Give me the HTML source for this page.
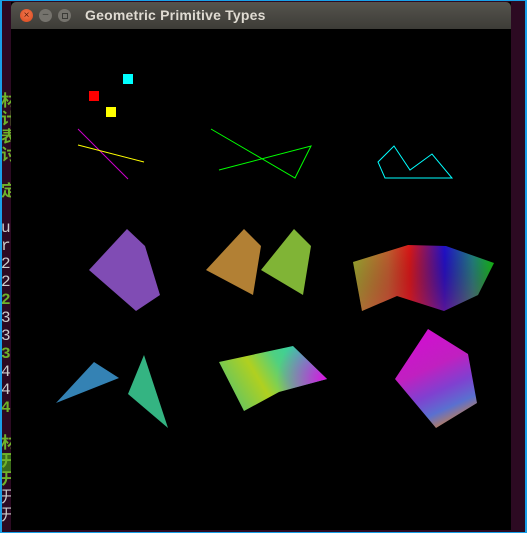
<!DOCTYPE html>
<html><head><meta charset="utf-8"><style>
html,body{margin:0;padding:0;width:527px;height:533px;overflow:hidden;background:#2c0a22;font-family:"Liberation Sans","Noto Sans CJK SC",sans-serif;}
#lb{position:absolute;left:0;top:0;width:2px;height:533px;background:#19a0e8}
#rb{position:absolute;left:525px;top:0;width:2px;height:533px;background:#19a0e8}
#tb{position:absolute;left:0;top:0;width:527px;height:1px;background:#19a0e8}
#bb{position:absolute;left:0;top:532px;width:527px;height:1px;background:#19a0e8}
#win{position:absolute;left:11px;top:2px;width:500px;height:528px;background:#000}
#title{position:absolute;left:0;top:0;width:500px;height:27px;background:linear-gradient(#55534d,#3d3c37);border-radius:5px 5px 0 0}
#title span{position:absolute;left:74px;top:5px;color:#dfdbd2;font-weight:bold;font-size:14px;letter-spacing:0.2px}
.b{position:absolute;top:7px;width:13px;height:13px;border-radius:50%;}
#term{position:absolute;left:1px;top:57px;width:11px;font-family:"Liberation Mono","Noto Sans CJK SC",monospace;font-size:16px;line-height:18px;color:#ccc;overflow:hidden;white-space:pre}
.g{color:#6fb22a;font-weight:bold}
</style></head><body>
<div id="term"> 
 
<span class="g">材</span>
<span class="g">计</span>
<span class="g">表</span>
<span class="g">讨</span>
 
<span class="g">定</span>
 
u
r
2
2
<span class="g">2</span>
3
3
<span class="g">3</span>
4
4
<span class="g">4</span>
 
<span class="g">材</span>
<span class="g" style="background:#3a6a1a">开</span>
<span class="g">开</span>
开
开</div>
<div id="lb"></div><div id="rb"></div><div id="tb"></div><div id="bb"></div>
<div id="win">
<div id="title">
<div class="b" style="left:9px;background:radial-gradient(circle at 50% 40%,#f3764c,#d8471c);color:#5a1a08;font-size:10px;text-align:center;line-height:13px">×</div>
<div class="b" style="left:28px;background:#75736d;color:#3a3a36;font-size:10px;text-align:center;line-height:12px">–</div>
<div class="b" style="left:47px;background:#75736d"><div style="position:absolute;left:4px;top:4px;width:4px;height:4px;border:1px solid #3a3a36"></div></div>
<span>Geometric Primitive Types</span>
</div>
</div>
<svg style="position:absolute;left:0;top:0" width="527" height="533">
<defs>
<linearGradient id="g1" x1="353" y1="0" x2="494" y2="0" gradientUnits="userSpaceOnUse">
<stop offset="0" stop-color="#9aaa30"/><stop offset="0.25" stop-color="#c06030"/><stop offset="0.4" stop-color="#d81818"/><stop offset="0.65" stop-color="#2010c8"/><stop offset="0.85" stop-color="#208080"/><stop offset="1" stop-color="#10c010"/></linearGradient>
<linearGradient id="g1b" x1="0" y1="245" x2="0" y2="311" gradientUnits="userSpaceOnUse">
<stop offset="0" stop-color="#000" stop-opacity="0"/><stop offset="1" stop-color="#c02040" stop-opacity="0.35"/></linearGradient>
<linearGradient id="g2" x1="219" y1="411" x2="327" y2="346" gradientUnits="userSpaceOnUse">
<stop offset="0" stop-color="#40c080"/><stop offset="0.4" stop-color="#b0d020"/><stop offset="0.6" stop-color="#50d080"/><stop offset="1" stop-color="#10d0d0"/></linearGradient>
<radialGradient id="g2b" cx="327" cy="379" r="50" gradientUnits="userSpaceOnUse">
<stop offset="0" stop-color="#e010e0"/><stop offset="1" stop-color="#e010e0" stop-opacity="0"/></radialGradient>
<linearGradient id="g3" x1="410" y1="340" x2="450" y2="428" gradientUnits="userSpaceOnUse">
<stop offset="0" stop-color="#d010d0"/><stop offset="0.35" stop-color="#c020c0"/><stop offset="0.6" stop-color="#8040d0"/><stop offset="0.8" stop-color="#5a70d0"/><stop offset="1" stop-color="#d08040"/></linearGradient>
</defs>
<rect x="123" y="74" width="10" height="10" fill="#0ff"/>
<rect x="89" y="91" width="10" height="10" fill="#f00"/>
<rect x="106" y="107" width="10" height="10" fill="#ff0"/>
<line x1="78" y1="129" x2="128" y2="179" stroke="#c0c" stroke-width="1"/>
<line x1="78" y1="145" x2="144" y2="162" stroke="#ff0" stroke-width="1"/>
<polyline points="211,129 295,178 311,146 219,170" fill="none" stroke="#0f0" stroke-width="1"/>
<polygon points="378,162 394,146 410,170 432,154 452,178 385,178" fill="none" stroke="#0ff" stroke-width="1"/>
<polygon points="127,229 145,246 160,295 136,311 89,270" fill="#804cb4"/>
<polygon points="244,229 261,246 253,295 206,270" fill="#b28034"/>
<polygon points="294,229 311,246 303,295 261,270" fill="#80b436"/>
<polygon points="353,262 408,245 446,246 494,263 478,295 444,311 397,296 362,311" fill="url(#g1)"/>
<polygon points="353,262 408,245 446,246 494,263 478,295 444,311 397,296 362,311" fill="url(#g1b)"/>
<polygon points="56,403 94,362 119,378" fill="#3482b4"/>
<polygon points="144,355 168,428 128,394" fill="#34b482"/>
<polygon points="219,362 293,346 327,379 279,392 244,411" fill="url(#g2)"/>
<polygon points="219,362 293,346 327,379 279,392 244,411" fill="url(#g2b)"/>
<polygon points="428,329 468,354 477,403 436,428 395,379" fill="url(#g3)"/>
</svg>
</body></html>
